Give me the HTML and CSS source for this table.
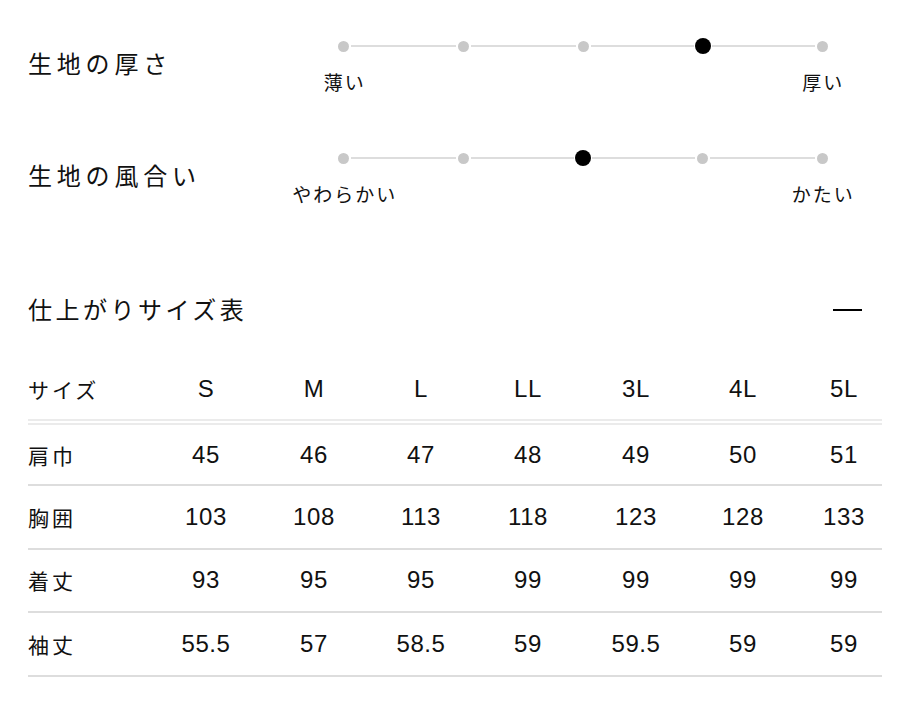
FILE: index.html
```html
<!DOCTYPE html>
<html lang="ja">
<head>
<meta charset="utf-8">
<title>生地とサイズ</title>
<link rel="stylesheet" href="styles.css">
</head>
<body>
<div class="page">
  <section class="scale scale-first">
    <h2 class="scale-title">生地の厚さ</h2>
    <div class="slider">
      <div class="stop first"><span class="seg"></span><span class="dot"></span><span class="seg"></span></div>
      <div class="stop"><span class="seg"></span><span class="dot"></span><span class="seg"></span></div>
      <div class="stop"><span class="seg"></span><span class="dot"></span><span class="seg"></span></div>
      <div class="stop"><span class="seg"></span><span class="dot active"></span><span class="seg"></span></div>
      <div class="stop last"><span class="seg"></span><span class="dot"></span><span class="seg"></span></div>
      <div class="label label-min">薄い</div>
      <div class="label label-max">厚い</div>
    </div>
  </section>

  <section class="scale">
    <h2 class="scale-title">生地の風合い</h2>
    <div class="slider">
      <div class="stop first"><span class="seg"></span><span class="dot"></span><span class="seg"></span></div>
      <div class="stop"><span class="seg"></span><span class="dot"></span><span class="seg"></span></div>
      <div class="stop"><span class="seg"></span><span class="dot active"></span><span class="seg"></span></div>
      <div class="stop"><span class="seg"></span><span class="dot"></span><span class="seg"></span></div>
      <div class="stop last"><span class="seg"></span><span class="dot"></span><span class="seg"></span></div>
      <div class="label label-min">やわらかい</div>
      <div class="label label-max">かたい</div>
    </div>
  </section>

  <section class="sizes">
    <div class="sizes-head">
      <h2 class="sizes-title">仕上がりサイズ表</h2>
      <span class="collapse" aria-label="閉じる"></span>
    </div>
    <table class="size-table">
      <colgroup>
        <col class="c-label"><col class="c-a"><col class="c-a"><col class="c-b"><col class="c-a"><col class="c-a"><col class="c-b"><col class="c-last">
      </colgroup>
      <thead>
        <tr><th class="rowname">サイズ</th><th>S</th><th>M</th><th>L</th><th>LL</th><th>3L</th><th>4L</th><th class="lastcol">5L</th></tr>
      </thead>
      <tbody>
        <tr><th class="rowname">肩巾</th><td>45</td><td>46</td><td>47</td><td>48</td><td>49</td><td>50</td><td class="lastcol">51</td></tr>
        <tr><th class="rowname">胸囲</th><td>103</td><td>108</td><td>113</td><td>118</td><td>123</td><td>128</td><td class="lastcol">133</td></tr>
        <tr><th class="rowname">着丈</th><td>93</td><td>95</td><td>95</td><td>99</td><td>99</td><td>99</td><td class="lastcol">99</td></tr>
        <tr><th class="rowname">袖丈</th><td>55.5</td><td>57</td><td>58.5</td><td>59</td><td>59.5</td><td>59</td><td class="lastcol">59</td></tr>
      </tbody>
    </table>
  </section>
</div>
</body>
</html>
```

FILE: styles.css
```css
html, body {
  margin: 0;
  padding: 0;
  background: #ffffff;
}

body {
  font-family: "Noto Sans CJK JP", "Liberation Sans", sans-serif;
  color: #111111;
}

.page {
  width: 854px;
  padding: 38px 24px 0 28px;
}

/* ---------- scales ---------- */
.scale {
  display: flex;
  align-items: flex-start;
}

.scale + .scale {
  margin-top: 55px;
}

.scale-title {
  width: 256px;
  margin: 8px 0 0 0;
  font-size: 24px;
  line-height: 34px;
  font-weight: 400;
  letter-spacing: 4.8px;
  white-space: nowrap;
}

.slider {
  width: 598px;
  display: grid;
  grid-template-columns: repeat(5, 1fr);
  grid-template-rows: 16px auto;
  row-gap: 15px;
}

.stop {
  display: flex;
  align-items: center;
  height: 16px;
}

.seg {
  flex: 1;
  height: 2px;
  background: #dddddd;
}

.stop.first .seg:first-child,
.stop.last .seg:last-child {
  background: transparent;
}

.dot {
  width: 11px;
  height: 11px;
  border-radius: 50%;
  background: #c8c8c8;
  margin: 0 2px;
  flex: none;
}

.dot.active {
  width: 16px;
  height: 16px;
  background: #000000;
  margin: 0 1px;
}

.label {
  grid-row: 2;
  justify-self: center;
  font-size: 19px;
  line-height: 26px;
  letter-spacing: 2px;
  margin-right: -2px;
  white-space: nowrap;
}

.label-min { grid-column: 1; }
.label-max { grid-column: 5; }

/* ---------- size table ---------- */
.sizes {
  margin-top: 85px;
}

.sizes-head {
  display: flex;
  justify-content: space-between;
  align-items: center;
}

.sizes-title {
  margin: 0;
  font-size: 24px;
  line-height: 34px;
  font-weight: 400;
  letter-spacing: 3.5px;
}

.collapse {
  display: block;
  width: 29px;
  height: 2px;
  background: #000000;
  margin-right: 20px;
  margin-top: 2px;
}

.size-table {
  margin-top: 33px;
  width: 854px;
  border-collapse: collapse;
  table-layout: fixed;
}

.c-label { width: 124px; }
.c-a { width: 108px; }
.c-b { width: 106px; }
.c-last { width: 86px; }

.size-table th,
.size-table td {
  padding: 0;
  text-align: center;
  font-family: "Liberation Sans", "Noto Sans CJK JP", sans-serif;
  font-size: 24px;
  font-weight: 400;
  letter-spacing: 0.6px;
  color: #111111;
}

.size-table .rowname {
  text-align: left;
  font-family: "Noto Sans CJK JP", "Liberation Sans", sans-serif;
  font-size: 21px;
  letter-spacing: 3px;
}

.size-table .lastcol {
  padding-left: 10px;
}

.size-table thead tr {
  height: 63px;
  border-bottom: 6px double #ebebeb;
}

.size-table tbody tr {
  height: 63.4px;
  border-bottom: 2px solid #dddddd;
}
```
